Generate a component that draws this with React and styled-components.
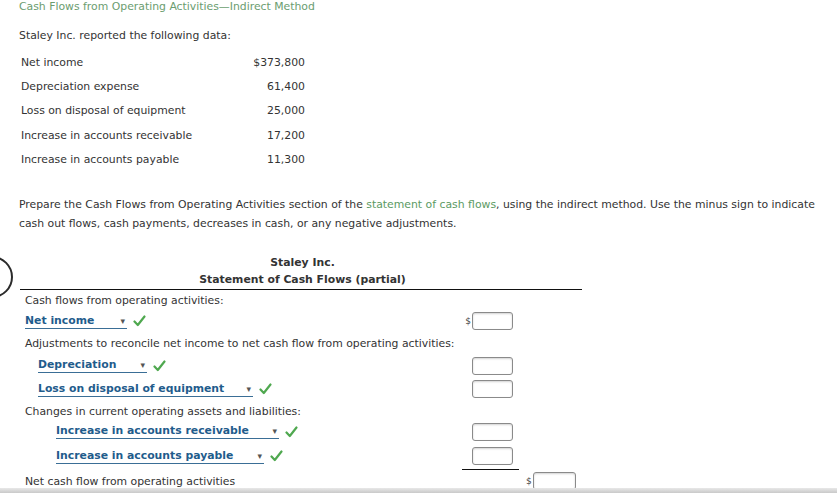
import React from "react";
import styled, { createGlobalStyle } from "styled-components";

const GlobalStyle = createGlobalStyle`
  html, body {
    margin: 0;
    padding: 0;
    background: #ffffff;
  }
  body {
    font-family: "DejaVu Sans", Verdana, sans-serif;
    font-size: 10.85px;
    color: #333333;
    overflow: hidden;
  }
`;

const data = [
  ["Net income", "$373,800"],
  ["Depreciation expense", "61,400"],
  ["Loss on disposal of equipment", "25,000"],
  ["Increase in accounts receivable", "17,200"],
  ["Increase in accounts payable", "11,300"],
];

const Check = () => (
  <CheckMark width="13" height="12" viewBox="0 0 13 12">
    <path d="M1.5 6.5 L4.8 10 L11.5 1.5" fill="none" stroke="#4fa84f" strokeWidth="2.2" strokeLinecap="round" strokeLinejoin="round" />
  </CheckMark>
);

const Picker = ({ label, width }) => (
  <PickerWrap>
    <Select w={width}>
      <span>{label}</span>
      <Arrow>▾</Arrow>
    </Select>
    <Check />
  </PickerWrap>
);

const App = () => {
  return (
    <Page>
      <GlobalStyle />
      <Circle />
      <Title>Cash Flows from Operating Activities—Indirect Method</Title>
      <Intro>Staley Inc. reported the following data:</Intro>
      <DataTable>
        {data.map(([label, value]) => (
          <React.Fragment key={label}>
            <DataLabel>{label}</DataLabel>
            <DataValue>{value}</DataValue>
          </React.Fragment>
        ))}
      </DataTable>
      <Instructions>
        Prepare the Cash Flows from Operating Activities section of the{" "}
        <Link>statement of cash flows</Link>, using the indirect method. Use the minus sign to indicate
        cash out flows, cash payments, decreases in cash, or any negative adjustments.
      </Instructions>

      <Statement>
        <Header>
          <div>Staley Inc.</div>
          <div>Statement of Cash Flows (partial)</div>
        </Header>

        <Row h={20}>
          <Label>Cash flows from operating activities:</Label>
        </Row>
        <Row h={22}>
          <Label>
            <Picker label="Net income" width={102} />
          </Label>
          <Amount>
            <Dollar>$</Dollar>
            <Input />
          </Amount>
        </Row>
        <Row h={22}>
          <Label>Adjustments to reconcile net income to net cash flow from operating activities:</Label>
        </Row>
        <Row h={23}>
          <Label indent={13}>
            <Picker label="Depreciation" width={109} />
          </Label>
          <Amount>
            <Input />
          </Amount>
        </Row>
        <Row h={24}>
          <Label indent={13}>
            <Picker label="Loss on disposal of equipment" width={215} />
          </Label>
          <Amount>
            <Input />
          </Amount>
        </Row>
        <Row h={20}>
          <Label>Changes in current operating assets and liabilities:</Label>
        </Row>
        <Row h={21}>
          <Label indent={31}>
            <Picker label="Increase in accounts receivable" width={223} />
          </Label>
          <Amount>
            <Input />
          </Amount>
        </Row>
        <Row h={28}>
          <Label indent={31}>
            <Picker label="Increase in accounts payable" width={208} />
          </Label>
          <Amount underline>
            <Input />
          </Amount>
        </Row>
        <Row h={22}>
          <Label>Net cash flow from operating activities</Label>
          <Amount />
          <Total>
            <Dollar>$</Dollar>
            <Input wide />
          </Total>
        </Row>
      </Statement>
      <BottomShade />
    </Page>
  );
};

export default App;

const Page = styled.div`
  position: relative;
  width: 837px;
  height: 493px;
  padding: 0 0 0 19px;
  box-sizing: border-box;
`;

const Circle = styled.div`
  position: absolute;
  left: -29px;
  top: 256px;
  width: 38px;
  height: 38px;
  border: 2px solid #2b2b2b;
  border-radius: 50%;
`;

const Title = styled.div`
  color: #6b9d70;
  line-height: 13px;
`;

const Intro = styled.div`
  margin-top: 16px;
  line-height: 14px;
`;

const DataTable = styled.div`
  display: grid;
  grid-template-columns: 200px 84px;
  margin: 7px 0 0 2px;
  grid-auto-rows: 24.3px;
  align-items: center;
`;

const DataLabel = styled.div``;

const DataValue = styled.div`
  text-align: right;
`;

const Instructions = styled.p`
  margin: 25px 0 0 0;
  line-height: 18.5px;
  width: 810px;
`;

const Link = styled.span`
  color: #5b9a63;
`;

const Statement = styled.div`
  width: 562px;
  margin: 21px 0 0 1px;
`;

const Header = styled.div`
  text-align: center;
  font-weight: bold;
  line-height: 17px;
  padding-left: 3px;
  border-bottom: 1.5px solid #111111;
  padding-bottom: 1px;
`;

const Row = styled.div`
  display: flex;
  align-items: center;
  height: ${(p) => p.h}px;
`;

const Label = styled.div`
  width: 442px;
  padding-left: ${(p) => 5 + (p.indent || 0)}px;
  box-sizing: border-box;
  white-space: nowrap;
`;

const Amount = styled.div`
  width: 57px;
  height: 100%;
  display: flex;
  align-items: center;
  justify-content: flex-end;
  padding-right: 6px;
  box-sizing: border-box;
  border-bottom: ${(p) => (p.underline ? "1.5px solid #111111" : "none")};
`;

const Total = styled.div`
  display: flex;
  align-items: center;
  padding-left: 7px;
`;

const Dollar = styled.span`
  font-size: 9px;
  color: #444444;
  margin-right: 1px;
`;

const Input = styled.div`
  width: ${(p) => (p.wide ? 43 : 41)}px;
  height: 18px;
  border: 1px solid #8a8a8a;
  border-radius: 3px;
  box-shadow: inset 0 1px 2px rgba(0, 0, 0, 0.18);
  background: #ffffff;
  box-sizing: border-box;
`;

const PickerWrap = styled.div`
  display: inline-flex;
  align-items: center;
  gap: 6px;
`;

const Select = styled.div`
  width: ${(p) => p.w}px;
  display: flex;
  align-items: center;
  justify-content: space-between;
  box-sizing: border-box;
  font-weight: bold;
  color: #1f5c8c;
  border-bottom: 1px solid #3a6e96;
  line-height: 14px;
`;

const Arrow = styled.span`
  color: #555555;
  font-size: 9px;
  font-weight: normal;
  margin-right: 2px;
`;

const CheckMark = styled.svg`
  display: block;
`;

const BottomShade = styled.div`
  position: fixed;
  left: 0;
  right: 0;
  bottom: 0;
  height: 5px;
  background: linear-gradient(#e8e8e8, #c9c9c9);
`;
